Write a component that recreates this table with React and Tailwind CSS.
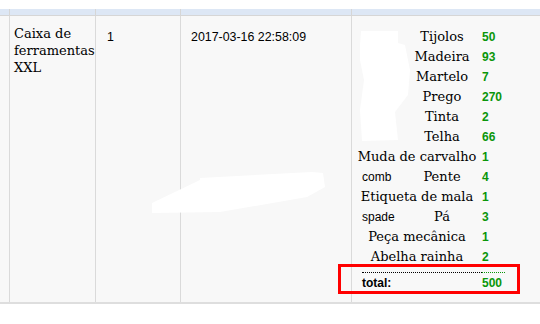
import React from "react";

const rows = [
  { en: "", pt: "Tijolos", n: "50" },
  { en: "", pt: "Madeira", n: "93" },
  { en: "", pt: "Martelo", n: "7" },
  { en: "", pt: "Prego", n: "270" },
  { en: "", pt: "Tinta", n: "2" },
  { en: "", pt: "Telha", n: "66" },
  { en: null, pt: "Muda de carvalho", n: "1" },
  { en: "comb", pt: "Pente", n: "4" },
  { en: null, pt: "Etiqueta de mala", n: "1" },
  { en: "spade", pt: "Pá", n: "3" },
  { en: null, pt: "Peça mecânica", n: "1" },
  { en: null, pt: "Abelha rainha", n: "2" },
];

const serif = "font-['DejaVu_Serif',serif]";
const sans = "font-['Liberation_Sans',Arial,sans-serif]";

export default function App() {
  return (
    <div className="relative w-[540px] h-[324px] bg-white overflow-hidden">
      <div className="pt-[9px]">
        {/* header */}
        <div className="flex h-[7px] bg-[#dde7f5] border-b border-[#d6d6d6]">
          <div className="w-[10px] border-r border-[#d6d6d6]" />
          <div className="w-[86px] border-r border-[#d6d6d6]" />
          <div className="w-[85px] border-r border-[#d6d6d6]" />
          <div className="w-[171px] border-r border-[#d6d6d6]" />
          <div className="flex-1" />
        </div>
        {/* body */}
        <div className="flex h-[288px] bg-[#f8f8f8] border-b-2 border-[#dedede]">
          <div className="w-[10px] border-r border-[#dadada]" />
          <div className={`w-[86px] border-r border-[#dadada] pl-[4px] pt-[9px] text-[13px] leading-[17px] text-black ${serif}`}>
            Caixa de ferramentas XXL
          </div>
          <div className={`w-[85px] border-r border-[#dadada] pl-[11px] pt-[14px] text-[12.4px] leading-[14px] text-black ${sans}`}>
            1
          </div>
          <div className={`w-[171px] border-r border-[#dadada] pl-[10px] pt-[14px] text-[12.4px] leading-[14px] text-black ${sans}`}>
            2017-03-16 22:58:09
          </div>
          <div className="flex-1 pl-[5px] pt-[11px]">
            <div className="w-[150px]">
              {rows.map((r, i) => (
                <div key={i} className="flex h-[20px] items-center">
                  <div className="flex w-[120px] items-center">
                    {r.en === null ? (
                      <div className={`w-full text-center text-[13px] text-black ${serif}`}>{r.pt}</div>
                    ) : (
                      <>
                        <div className={`w-[50px] pl-[5px] text-[12px] text-black ${sans}`}>{r.en}</div>
                        <div className={`w-[70px] text-center text-[13px] text-black ${serif}`}>{r.pt}</div>
                      </>
                    )}
                  </div>
                  <div className={`pl-[5px] text-[12px] font-bold text-[#0a960a] ${sans}`}>{r.n}</div>
                </div>
              ))}
              <div className="mt-[5px] flex w-[150px]">
                <div className="w-[120px] ml-[5px] border-t border-dotted border-black" />
                <div className="w-[23px] border-t border-dotted border-[#0a960a]" />
              </div>
              <div className="flex h-[20px] items-center">
                <div className={`w-[125px] pl-[5px] text-[12px] font-bold text-black ${sans}`}>total:</div>
                <div className={`text-[12px] font-bold text-[#0a960a] ${sans}`}>500</div>
              </div>
            </div>
          </div>
        </div>
      </div>

      {/* redaction blobs */}
      <svg className="absolute left-0 top-0" width="540" height="324" viewBox="0 0 540 324">
        <polygon
          points="152,203 200,180 200,178 312,172 323,173 325,187 307,197 220,212 152,213"
          fill="#ffffff"
        />
        <polygon
          points="361,31 398,31 398,43 405,45 410,70 408,95 395,112 398,140 362,141 360,110 364,80 360,60 360,45"
          fill="#ffffff"
        />
      </svg>

      {/* annotation box */}
      <div className="absolute left-[338px] top-[264px] w-[182px] h-[30px] border-[3px] border-[#ff0000]" />
    </div>
  );
}
